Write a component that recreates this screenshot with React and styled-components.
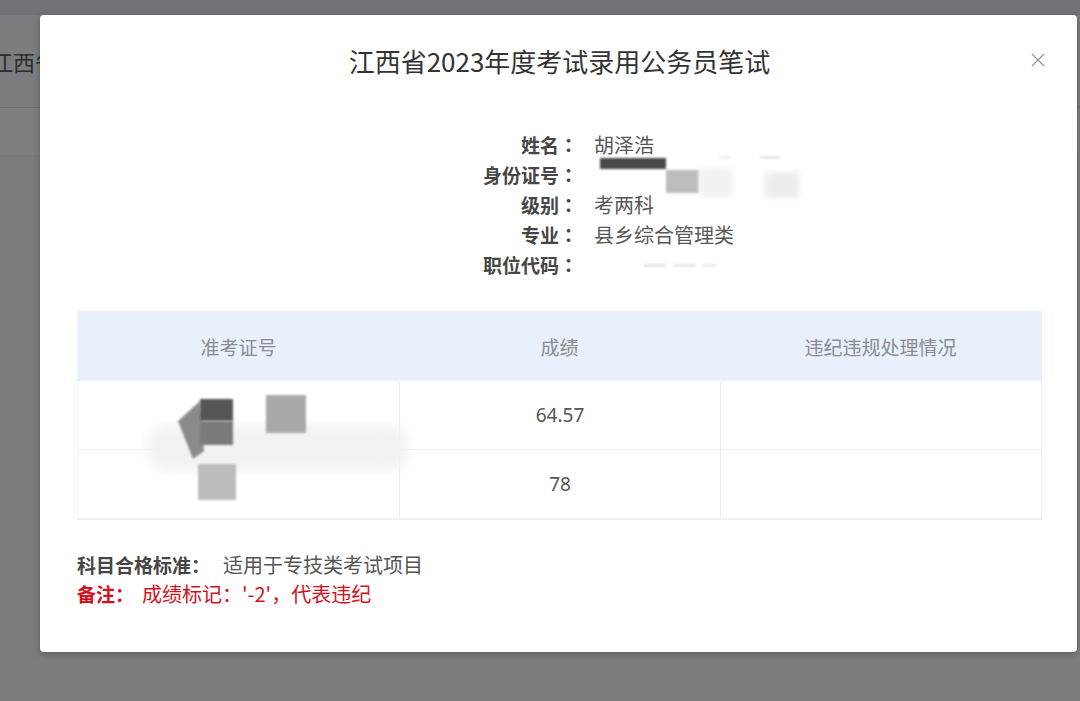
import React from "react";
import styled, { createGlobalStyle } from "styled-components";

const GlobalStyle = createGlobalStyle`
  html, body {
    margin: 0;
    padding: 0;
    background: #7b7c7e;
  }
  body {
    font-family: "Noto Sans CJK SC", "Noto Sans", sans-serif;
    overflow: hidden;
  }
`;

const Page = styled.div`
  position: relative;
  width: 1080px;
  height: 701px;
  background: #7b7c7e;
  overflow: hidden;
`;

const TopStrip = styled.div`
  height: 15px;
  background: #717379;
`;

const PageHeader = styled.div`
  height: 92px;
  display: flex;
  align-items: center;
  margin-left: -9px;
  font-size: 22px;
  color: #2c2d2f;
  border-bottom: 1px solid #707173;
`;

const PageBand = styled.div`
  height: 47px;
  background: #7d7e80;
  border-bottom: 1px solid #78797b;
`;

const Modal = styled.section`
  position: absolute;
  left: 40px;
  top: 15px;
  width: 1037px;
  height: 637px;
  background: #fff;
  border-radius: 4px;
  box-shadow: 0 2px 6px rgba(0, 0, 0, 0.25);
  display: flex;
  flex-direction: column;
  padding: 0 35px 0 37px;
  box-sizing: border-box;
`;

const Head = styled.header`
  position: relative;
  height: 90px;
  display: flex;
  align-items: center;
  justify-content: center;
`;

const Title = styled.h1`
  margin: 0;
  font-size: 26px;
  font-weight: 400;
  color: #333;
`;

const Close = styled.button`
  position: absolute;
  right: -4px;
  top: 37px;
  width: 16px;
  height: 16px;
  padding: 0;
  border: 0;
  background: none;
  display: flex;
`;

const Info = styled.div`
  margin-top: 25px;
  display: grid;
  grid-template-columns: 501px 1fr;
  column-gap: 16px;
  position: relative;
`;

const Label = styled.div`
  text-align: right;
  font-size: 19px;
  line-height: 30px;
  height: 30px;
  font-weight: 700;
  color: #464646;
`;

const Colon = styled.span`
  font-family: "Noto Sans CJK TC", "Noto Sans CJK SC", sans-serif;
`;

const Value = styled.div`
  font-size: 20px;
  line-height: 30px;
  height: 30px;
  color: #585858;
  position: relative;
`;

const Mask = styled.svg`
  position: absolute;
  left: ${(p) => p.$x}px;
  top: ${(p) => p.$y}px;
  overflow: visible;
  pointer-events: none;
`;

const Table = styled.div`
  margin-top: 31px;
  border-right: 1px solid #eceef2;
  border-bottom: 1px solid #eceef2;
  border-left: 1px solid #f3f4f6;
`;

const Row = styled.div`
  display: grid;
  grid-template-columns: repeat(3, 1fr);
  height: ${(p) => (p.$head ? 70 : 69)}px;
  background: ${(p) => (p.$head ? "#e8f0fc" : "#fff")};
  border-bottom: ${(p) => (p.$head ? "0" : "1px solid #eef0f3")};
  box-sizing: border-box;
  &:last-child {
    border-bottom: 0;
  }
`;

const Cell = styled.div`
  display: flex;
  align-items: center;
  justify-content: center;
  font-size: 19px;
  color: ${(p) => (p.$head ? "#8a8c90" : "#555")};
  font-family: ${(p) =>
    p.$num ? '"Noto Sans", "Noto Sans CJK SC", sans-serif' : "inherit"};
  border-left: ${(p) => (p.$head || p.$first ? "0" : "1px solid #eceef2")};
`;

const Body = styled.div`
  position: relative;
`;

const Notes = styled.div`
  margin-top: 30px;
  display: flex;
  flex-direction: column;
`;

const NoteLine = styled.div`
  font-size: 20px;
  line-height: 29px;
  color: ${(p) => (p.$red ? "#d3101c" : "#555")};
`;

const NoteLabel = styled.span`
  font-size: 19px;
  font-weight: 700;
  color: ${(p) => (p.$red ? "#d3101c" : "#464646")};
  margin-right: ${(p) => p.$gap}px;
`;

const rows = [
  { label: "姓名", value: "胡泽浩" },
  { label: "身份证号", value: "", id: true },
  { label: "级别", value: "考两科" },
  { label: "专业", value: "县乡综合管理类" },
  { label: "职位代码", value: "", code: true },
];

const IdMask = () => (
  <Mask $x={6} $y={-8} width="210" height="50">
    <defs>
      <filter id="b1"><feGaussianBlur stdDeviation="1.2" /></filter>
      <filter id="b2"><feGaussianBlur stdDeviation="3" /></filter>
    </defs>
    <rect x="0" y="6" width="66" height="11" fill="#4a4a4a" filter="url(#b1)" />
    <rect x="66" y="18" width="33" height="23" fill="#bdbdbd" filter="url(#b1)" />
    <rect x="100" y="16" width="32" height="28" fill="#f1f1f1" filter="url(#b2)" />
    <rect x="165" y="20" width="34" height="26" fill="#ececec" filter="url(#b2)" />
    <rect x="160" y="4" width="20" height="3" fill="#e6e6e6" filter="url(#b1)" />
    <rect x="120" y="4" width="10" height="3" fill="#eeeeee" filter="url(#b1)" />
  </Mask>
);

const CodeMask = () => (
  <Mask $x={50} $y={12} width="80" height="10">
    <defs>
      <filter id="b3"><feGaussianBlur stdDeviation="1" /></filter>
    </defs>
    <rect x="0" y="2" width="22" height="3" fill="#e4e4e4" filter="url(#b3)" />
    <rect x="30" y="2" width="22" height="3" fill="#e8e8e8" filter="url(#b3)" />
    <rect x="58" y="2" width="14" height="3" fill="#ededed" filter="url(#b3)" />
  </Mask>
);

const TicketMask = () => (
  <Mask $x={60} $y={0} width="300" height="138">
    <defs>
      <filter id="b4"><feGaussianBlur stdDeviation="1" /></filter>
      <filter id="b5"><feGaussianBlur stdDeviation="6" /></filter>
    </defs>
    <rect x="10" y="44" width="260" height="46" rx="20" fill="#f2f2f2" filter="url(#b5)" />
    <path d="M40 40 L62 20 L66 70 L55 78 Z" fill="#8a8a8a" filter="url(#b4)" />
    <rect x="62" y="18" width="33" height="22" fill="#555" filter="url(#b4)" />
    <rect x="62" y="40" width="33" height="24" fill="#7a7a7a" filter="url(#b4)" />
    <rect x="128" y="14" width="40" height="38" fill="#a9a9a9" filter="url(#b4)" />
    <rect x="60" y="83" width="38" height="36" fill="#bcbcbc" filter="url(#b4)" />
  </Mask>
);

const App = () => {
  return (
    <Page>
      <GlobalStyle />
      <TopStrip />
      <PageHeader>江西省</PageHeader>
      <PageBand />
      <Modal>
        <Head>
          <Title>江西省2023年度考试录用公务员笔试</Title>
          <Close aria-label="关闭">
            <svg width="16" height="16" viewBox="0 0 16 16">
              <path d="M2 2 L14 14 M14 2 L2 14" stroke="#9a9a9a" strokeWidth="1.4" />
            </svg>
          </Close>
        </Head>
        <Info>
          {rows.map((r) => (
            <React.Fragment key={r.label}>
              <Label>
                {r.label}
                <Colon>：</Colon>
              </Label>
              <Value>
                {r.value}
                {r.id && <IdMask />}
                {r.code && <CodeMask />}
              </Value>
            </React.Fragment>
          ))}
        </Info>
        <Table>
          <Row $head>
            <Cell $head>准考证号</Cell>
            <Cell $head>成绩</Cell>
            <Cell $head>违纪违规处理情况</Cell>
          </Row>
          <Body>
            <Row>
              <Cell $first />
              <Cell $num>64.57</Cell>
              <Cell />
            </Row>
            <Row>
              <Cell $first />
              <Cell $num>78</Cell>
              <Cell />
            </Row>
            <TicketMask />
          </Body>
        </Table>
        <Notes>
          <NoteLine>
            <NoteLabel $gap={13}>科目合格标准：</NoteLabel>
            适用于专技类考试项目
          </NoteLine>
          <NoteLine $red>
            <NoteLabel $red $gap={8}>备注：</NoteLabel>
            成绩标记：'-2'，代表违纪
          </NoteLine>
        </Notes>
      </Modal>
    </Page>
  );
};

export default App;
